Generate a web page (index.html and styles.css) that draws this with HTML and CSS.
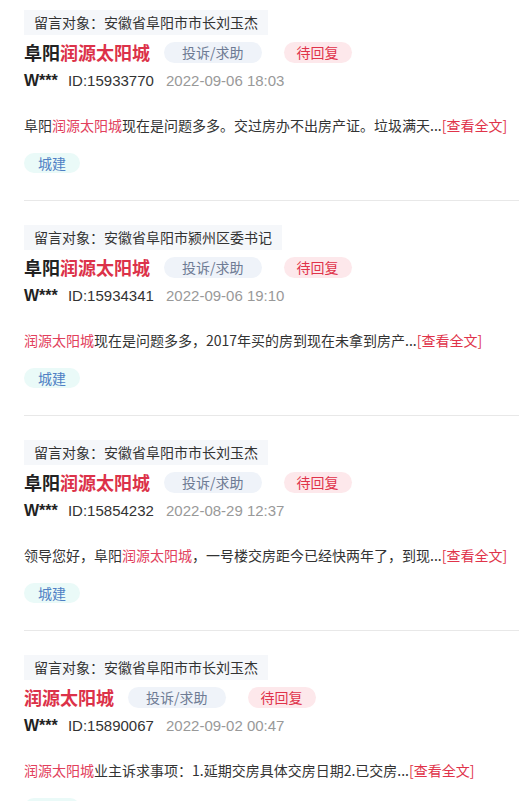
FILE: index.html
```html
<!DOCTYPE html>
<html lang="zh-CN">

<head>
    <meta charset="UTF-8">
    <meta name="viewport" content="width=device-width, initial-scale=1.0">
    <title>留言列表</title>
    <link rel="stylesheet" href="styles.css">
</head>

<body>
    <ul class="list">
        <li class="item">
            <div class="target">留言对象：安徽省阜阳市市长刘玉杰</div>
            <div class="title-row">
                <h3 class="title">阜阳<span class="hl">润源太阳城</span></h3>
                <span class="pill pill-type">投诉/求助</span>
                <span class="pill pill-status">待回复</span>
            </div>
            <div class="meta">
                <span class="user">W***</span>
                <span class="id">ID:15933770</span>
                <span class="time">2022-09-06 18:03</span>
            </div>
            <p class="content">阜阳<span class="hl-text">润源太阳城</span>现在是问题多多。交过房办不出房产证。垃圾满天...<a class="more">[查看全文]</a></p>
            <span class="tag">城建</span>
        </li>

        <li class="item">
            <div class="target">留言对象：安徽省阜阳市颍州区委书记</div>
            <div class="title-row">
                <h3 class="title">阜阳<span class="hl">润源太阳城</span></h3>
                <span class="pill pill-type">投诉/求助</span>
                <span class="pill pill-status">待回复</span>
            </div>
            <div class="meta">
                <span class="user">W***</span>
                <span class="id">ID:15934341</span>
                <span class="time">2022-09-06 19:10</span>
            </div>
            <p class="content"><span class="hl-text">润源太阳城</span>现在是问题多多，2017年买的房到现在未拿到房产...<a class="more">[查看全文]</a></p>
            <span class="tag">城建</span>
        </li>

        <li class="item">
            <div class="target">留言对象：安徽省阜阳市市长刘玉杰</div>
            <div class="title-row">
                <h3 class="title">阜阳<span class="hl">润源太阳城</span></h3>
                <span class="pill pill-type">投诉/求助</span>
                <span class="pill pill-status">待回复</span>
            </div>
            <div class="meta">
                <span class="user">W***</span>
                <span class="id">ID:15854232</span>
                <span class="time">2022-08-29 12:37</span>
            </div>
            <p class="content">领导您好，阜阳<span class="hl-text">润源太阳城</span>，一号楼交房距今已经快两年了，到现...<a class="more">[查看全文]</a></p>
            <span class="tag">城建</span>
        </li>

        <li class="item">
            <div class="target">留言对象：安徽省阜阳市市长刘玉杰</div>
            <div class="title-row">
                <h3 class="title"><span class="hl">润源太阳城</span></h3>
                <span class="pill pill-type">投诉/求助</span>
                <span class="pill pill-status">待回复</span>
            </div>
            <div class="meta">
                <span class="user">W***</span>
                <span class="id">ID:15890067</span>
                <span class="time">2022-09-02 00:47</span>
            </div>
            <p class="content"><span class="hl-text">润源太阳城</span>业主诉求事项：1.延期交房具体交房日期2.已交房...<a class="more">[查看全文]</a></p>
            <span class="tag">城建</span>
        </li>
    </ul>
</body>

</html>
```

FILE: styles.css
```css
body {
    margin: 0;
    background-color: #fff;
    font-family: "Noto Sans CJK SC", sans-serif;
    color: #333;
}

.list {
    list-style: none;
    margin: 0;
    padding: 10px 0 0 24px;
}

.item {
    display: flex;
    flex-direction: column;
    align-items: flex-start;
    padding-bottom: 27px;
    margin-bottom: 24px;
    border-bottom: 1px solid #e8e8e8;
}

.target {
    padding: 0 10px;
    height: 25px;
    line-height: 25px;
    font-size: 14px;
    background-color: #f5f7fa;
    color: #333;
}

.title-row {
    display: flex;
    align-items: center;
    gap: 14px;
    margin-top: 4px;
    height: 27px;
}

.title {
    margin: 0;
    font-size: 18px;
    font-weight: bold;
    line-height: 27px;
    color: #222;
}

.hl {
    color: #dc3249;
}

.pill {
    height: 21px;
    line-height: 21px;
    font-size: 14px;
    border-radius: 11px;
}

.pill-type {
    padding: 0 18px;
    background-color: #eff3f9;
    color: #6e7b94;
}

.pill-status {
    padding: 0 13px;
    margin-left: 8px;
    background-color: #fde8eb;
    color: #e0334a;
}

.meta {
    margin-top: 4px;
    line-height: 22px;
    font-size: 15px;
    font-family: "Liberation Sans", "Noto Sans CJK SC", sans-serif;
}

.user {
    font-size: 16px;
    font-weight: bold;
    color: #222;
    margin-right: 6px;
}

.id {
    color: #333;
    margin-right: 8px;
}

.time {
    color: #999;
}

.content {
    margin: 22px 0 0;
    font-size: 14px;
    line-height: 22px;
    color: #333;
}

.hl-text {
    color: #e2405c;
}

.more {
    color: #e0334a;
}

.tag {
    margin-top: 17px;
    padding: 0 14px;
    height: 20px;
    line-height: 20px;
    font-size: 14px;
    border-radius: 10px;
    background-color: #eafaf8;
    color: #4f80c4;
}
```
